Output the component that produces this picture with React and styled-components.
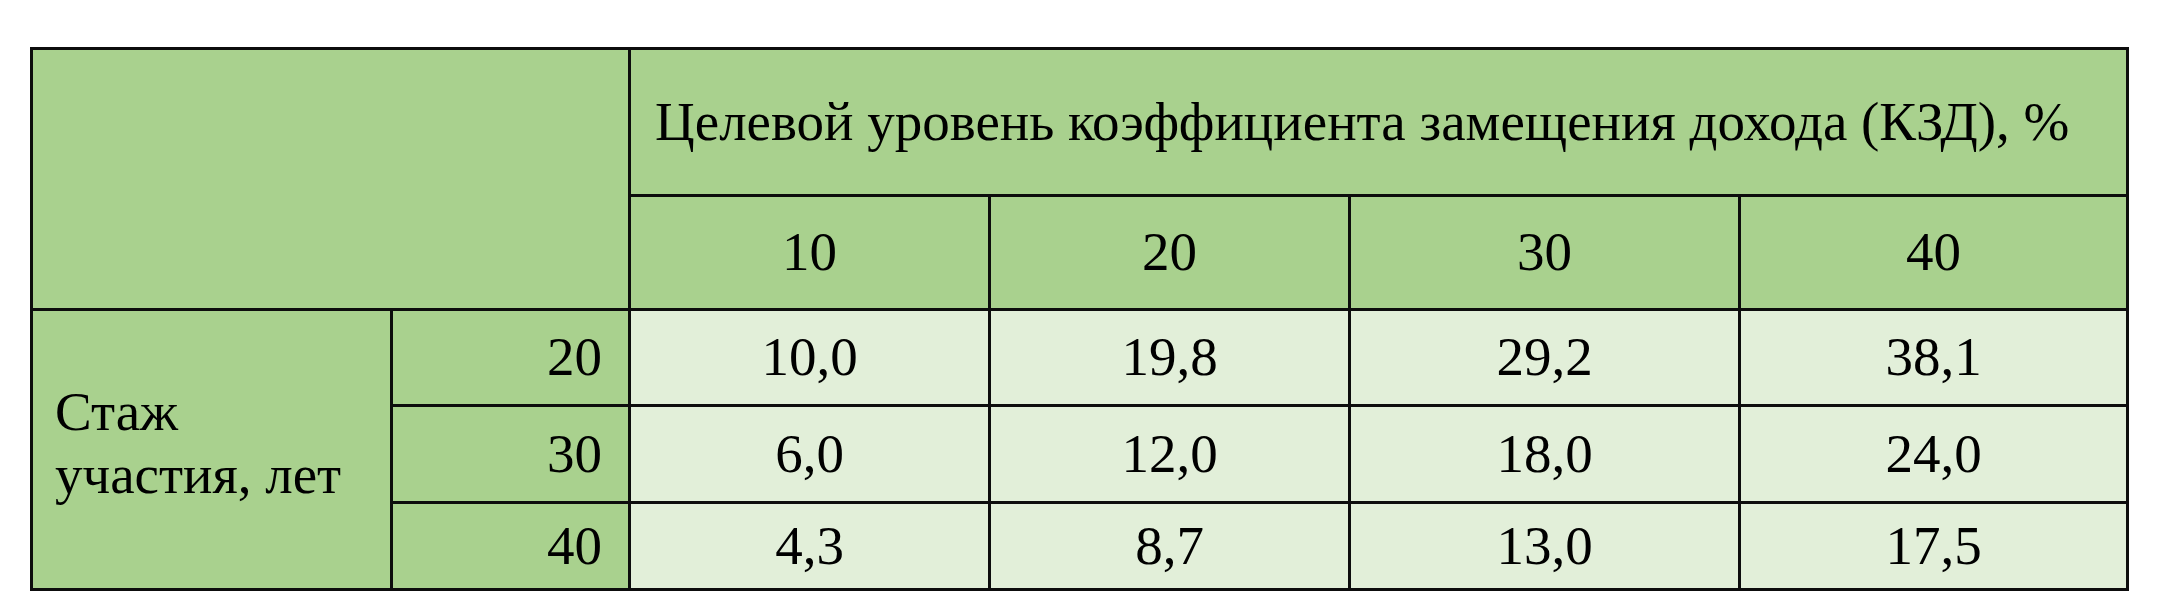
import React from "react";
import styled, { createGlobalStyle } from "styled-components";

const GlobalStyle = createGlobalStyle`
  html, body {
    margin: 0;
    padding: 0;
    background: #ffffff;
  }
`;

const Page = styled.div`
  padding: 47px 0 0 30px;
`;

const Table = styled.table`
  border-collapse: collapse;
  table-layout: fixed;
  width: 2096px;
  font-family: "Liberation Serif", "Times New Roman", serif;
  font-size: 55px;
  color: #000000;
  border: 3px solid #0d0d0d;
`;

const Row = styled.tr`
  height: ${(props) => props.h}px;
`;

const Cell = styled.td`
  border: 3px solid #0d0d0d;
  padding: 0;
  line-height: 1.14;
  vertical-align: middle;
  background: ${(props) => (props.light ? "#e2efd9" : "#a9d18e")};
  text-align: ${(props) => props.align || "center"};
  padding-left: ${(props) => props.pl || 0}px;
  padding-right: ${(props) => props.pr || 0}px;
  padding-bottom: ${(props) => props.pb || 0}px;
`;

const columns = [360, 238, 360, 360, 390, 388];
const levels = ["10", "20", "30", "40"];

const rows = [
  { years: "20", h: 96, values: ["10,0", "19,8", "29,2", "38,1"] },
  { years: "30", h: 97, values: ["6,0", "12,0", "18,0", "24,0"] },
  { years: "40", h: 87, values: ["4,3", "8,7", "13,0", "17,5"] },
];

export default function App() {
  return (
    <Page>
      <GlobalStyle />
      <Table>
        <colgroup>
          {columns.map((w, i) => (
            <col key={i} style={{ width: w }} />
          ))}
        </colgroup>
        <tbody>
          <Row h={147}>
            <Cell colSpan={2} rowSpan={2} />
            <Cell colSpan={4} align="left" pl={24}>
              Целевой уровень коэффициента замещения дохода (КЗД), %
            </Cell>
          </Row>
          <Row h={114}>
            {levels.map((l) => (
              <Cell key={l}>{l}</Cell>
            ))}
          </Row>
          {rows.map((r, i) => (
            <Row key={r.years} h={r.h}>
              {i === 0 && (
                <Cell rowSpan={3} align="left" pl={22} pb={12}>
                  Стаж
                  <br />
                  участия, лет
                </Cell>
              )}
              <Cell align="right" pr={26}>
                {r.years}
              </Cell>
              {r.values.map((v, j) => (
                <Cell key={j} light>
                  {v}
                </Cell>
              ))}
            </Row>
          ))}
        </tbody>
      </Table>
    </Page>
  );
}
